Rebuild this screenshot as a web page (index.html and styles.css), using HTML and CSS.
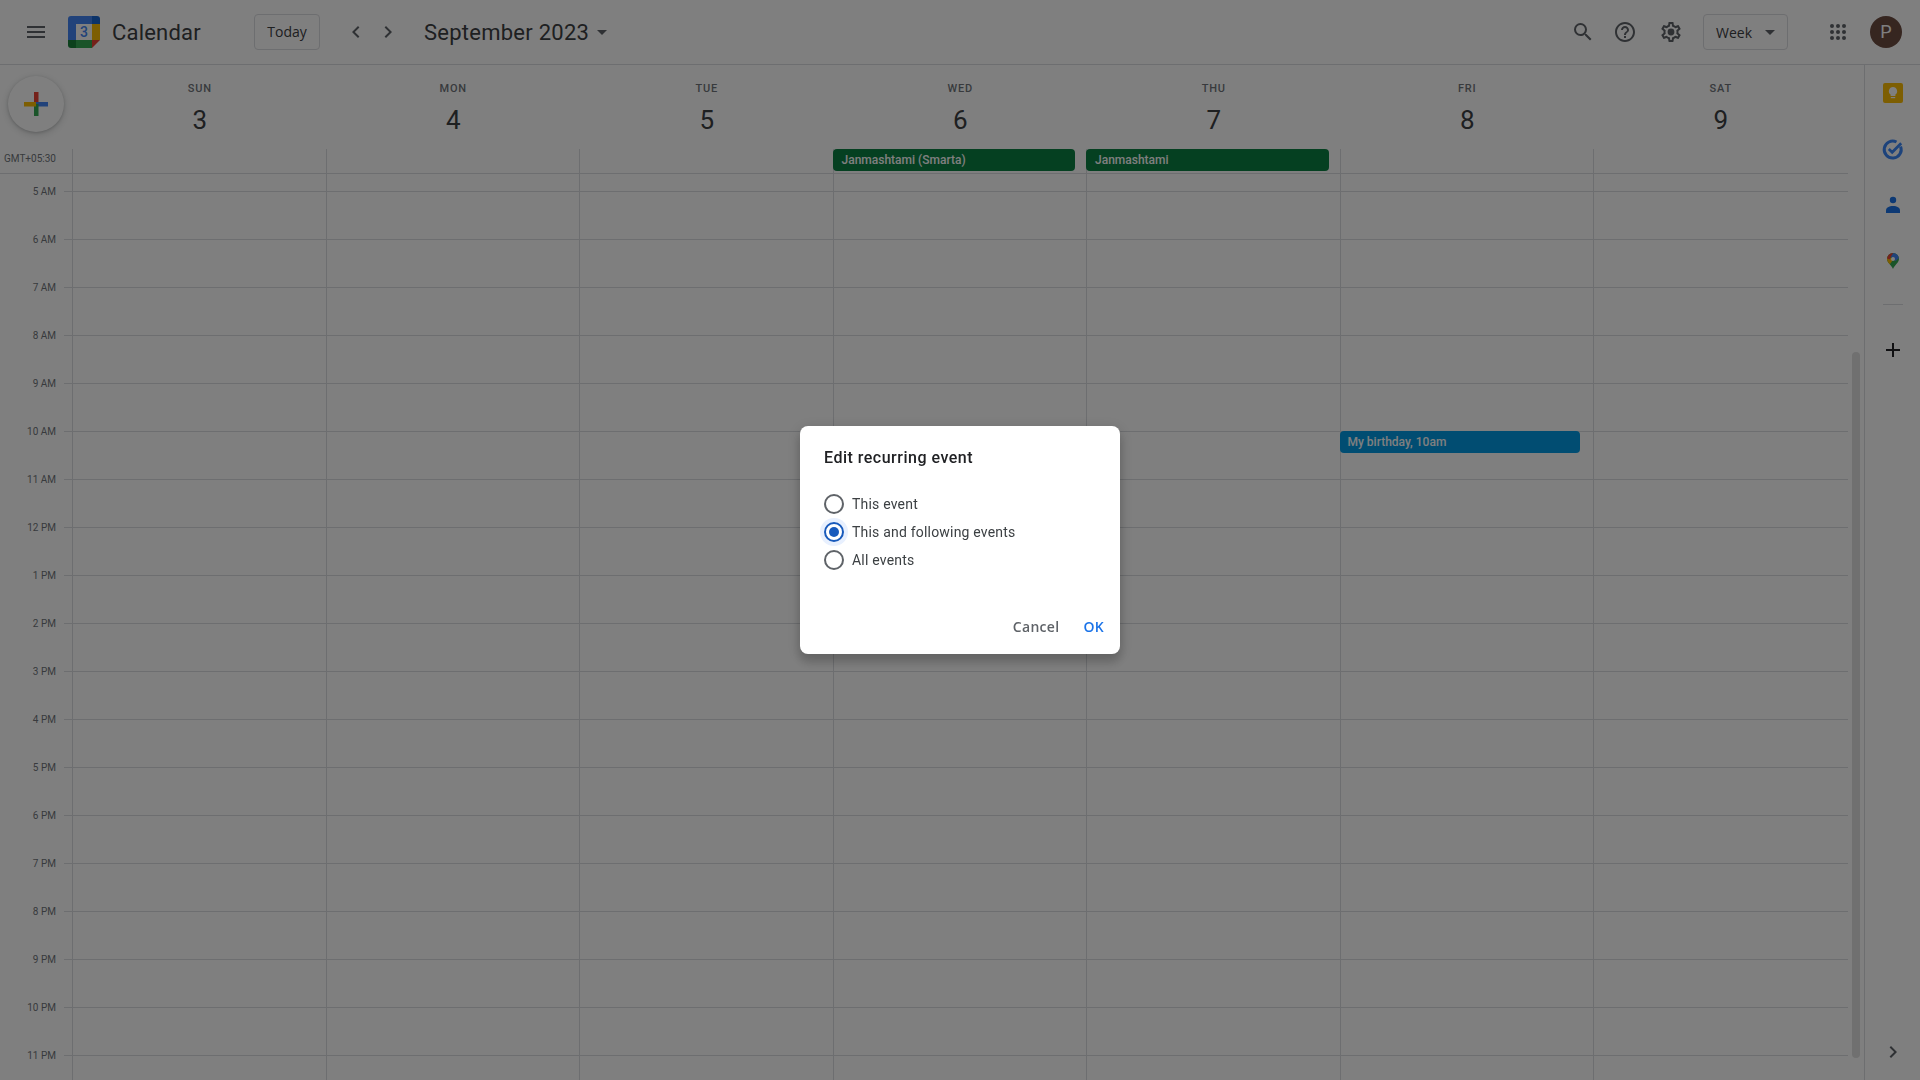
FILE: index.html
```html
<!DOCTYPE html>
<html lang="en">
<head>
  <meta charset="UTF-8" />
  <title>Calendar - Week of September 3, 2023</title>
  <link rel="stylesheet" href="styles.css">
</head>
<body>

  <header class="topbar">
    <button class="icon-btn menu-btn">
      <svg viewBox="0 0 24 24" width="24" height="24"><path d="M3 18h18v-2H3v2zm0-5h18v-2H3v2zm0-7v2h18V6H3z"/></svg>
    </button>
    <svg class="logo" viewBox="0 0 32 32" width="32" height="32">
      <path fill="#4285f4" d="M3 0h21v8H8v16H0V3a3 3 0 0 1 3-3z"/>
      <path fill="#1967d2" d="M24 0h5a3 3 0 0 1 3 3v5h-8z"/>
      <rect fill="#fbbc04" x="24" y="8" width="8" height="16"/>
      <rect fill="#34a853" x="8" y="24" width="16" height="8"/>
      <path fill="#188038" d="M0 24h8v8H3a3 3 0 0 1-3-3z"/>
      <path fill="#ea4335" d="M24 24h8l-8 8z"/>
      <rect fill="#fff" x="8" y="8" width="16" height="16"/>
      <text class="logo-num" x="16" y="21" text-anchor="middle">3</text>
    </svg>
    <span class="app-name">Calendar</span>
    <button class="outline-btn today-btn">Today</button>
    <button class="icon-btn nav-prev">
      <svg viewBox="0 0 24 24" width="24" height="24"><path d="M15.41 7.41 14 6l-6 6 6 6 1.41-1.41L10.83 12z"/></svg>
    </button>
    <button class="icon-btn nav-next">
      <svg viewBox="0 0 24 24" width="24" height="24"><path d="M8.59 16.59 10 18l6-6-6-6-1.41 1.41L13.17 12z"/></svg>
    </button>
    <span class="month-title">September 2023</span>
    <span class="caret month-caret"></span>

    <div class="topbar-right">
      <button class="icon-btn">
        <svg viewBox="0 0 24 24" width="24" height="24"><path d="M15.5 14h-.79l-.28-.27A6.471 6.471 0 0 0 16 9.5 6.5 6.5 0 1 0 9.5 16c1.61 0 3.09-.59 4.23-1.57l.27.28v.79l5 4.99L20.49 19l-4.99-5zm-6 0C7.01 14 5 11.99 5 9.5S7.01 5 9.5 5 14 7.01 14 9.5 11.99 14 9.5 14z"/></svg>
      </button>
      <button class="icon-btn">
        <svg viewBox="0 0 24 24" width="24" height="24"><path d="M11 18h2v-2h-2v2zm1-16C6.48 2 2 6.48 2 12s4.48 10 10 10 10-4.48 10-10S17.52 2 12 2zm0 18c-4.41 0-8-3.59-8-8s3.59-8 8-8 8 3.59 8 8-3.59 8-8 8zm0-14c-2.21 0-4 1.79-4 4h2c0-1.1.9-2 2-2s2 .9 2 2c0 2-3 1.75-3 5h2c0-2.25 3-2.5 3-5 0-2.21-1.79-4-4-4z"/></svg>
      </button>
      <button class="icon-btn gear-btn">
        <svg viewBox="0 0 24 24" width="24" height="24"><path d="M19.43 12.98c.04-.32.07-.64.07-.98 0-.34-.03-.66-.07-.98l2.11-1.65c.19-.15.24-.42.12-.64l-2-3.46c-.09-.16-.26-.25-.44-.25-.06 0-.12.01-.17.03l-2.49 1c-.52-.4-1.08-.73-1.69-.98l-.38-2.65C14.46 2.18 14.25 2 14 2h-4c-.25 0-.46.18-.49.42l-.38 2.65c-.61.25-1.17.59-1.69.98l-2.49-1c-.06-.02-.12-.03-.18-.03-.17 0-.34.09-.43.25l-2 3.46c-.13.22-.07.49.12.64l2.11 1.65c-.04.32-.07.65-.07.98 0 .33.03.66.07.98l-2.11 1.65c-.19.15-.24.42-.12.64l2 3.46c.09.16.26.25.44.25.06 0 .12-.01.17-.03l2.49-1c.52.4 1.08.73 1.69.98l.38 2.65c.03.24.24.42.49.42h4c.25 0 .46-.18.49-.42l.38-2.65c.61-.25 1.17-.59 1.69-.98l2.49 1c.06.02.12.03.18.03.17 0 .34-.09.43-.25l2-3.46c.12-.22.07-.49-.12-.64l-2.11-1.65zm-1.98-1.71c.04.31.05.52.05.73 0 .21-.02.43-.05.73l-.14 1.13.89.7 1.08.84-.7 1.21-1.27-.51-1.04-.42-.9.68c-.43.32-.84.56-1.25.73l-1.06.43-.16 1.13-.2 1.35h-1.4l-.19-1.35-.16-1.13-1.06-.43c-.43-.18-.83-.41-1.23-.71l-.91-.7-1.06.43-1.27.51-.7-1.21 1.08-.84.89-.7-.14-1.13c-.03-.31-.05-.54-.05-.74s.02-.43.05-.73l.14-1.13-.89-.7-1.08-.84.7-1.21 1.27.51 1.04.42.9-.68c.43-.32.84-.56 1.25-.73l1.06-.43.16-1.13.2-1.35h1.39l.19 1.35.16 1.13 1.06.43c.43.18.83.41 1.23.71l.91.7 1.06-.43 1.27-.51.7 1.21-1.07.85-.89.7.14 1.13z"/><circle cx="12" cy="12" r="3.4"/></svg>
      </button>
      <button class="outline-btn week-btn">Week<span class="caret"></span></button>
      <button class="icon-btn apps-btn">
        <svg viewBox="0 0 24 24" width="24" height="24">
          <circle cx="6" cy="6" r="2"/><circle cx="12" cy="6" r="2"/><circle cx="18" cy="6" r="2"/>
          <circle cx="6" cy="12" r="2"/><circle cx="12" cy="12" r="2"/><circle cx="18" cy="12" r="2"/>
          <circle cx="6" cy="18" r="2"/><circle cx="12" cy="18" r="2"/><circle cx="18" cy="18" r="2"/>
        </svg>
      </button>
      <div class="avatar">P</div>
    </div>
  </header>

  <div class="content">
    <main class="calendar">
      <div class="week-head">
        <div class="fab-cell">
          <button class="fab">
            <svg viewBox="0 0 36 36" width="36" height="36">
              <rect fill="#ea4335" x="16" y="6" width="4.500" height="12"/>
              <rect fill="#4285f4" x="18" y="16" width="12" height="4.500"/>
              <rect fill="#34a853" x="16" y="18" width="4.500" height="12"/>
              <rect fill="#fbbc04" x="6" y="16" width="12" height="4.500"/>
            </svg>
          </button>
        </div>
        <div class="day-head"><span class="dow">SUN</span><span class="dom">3</span></div>
        <div class="day-head"><span class="dow">MON</span><span class="dom">4</span></div>
        <div class="day-head"><span class="dow">TUE</span><span class="dom">5</span></div>
        <div class="day-head"><span class="dow">WED</span><span class="dom">6</span></div>
        <div class="day-head"><span class="dow">THU</span><span class="dom">7</span></div>
        <div class="day-head"><span class="dow">FRI</span><span class="dom">8</span></div>
        <div class="day-head"><span class="dow">SAT</span><span class="dom">9</span></div>
      </div>

      <div class="allday-row">
        <div class="tz-label">GMT+05:30</div>
        <div class="allday-cell"></div>
        <div class="allday-cell"></div>
        <div class="allday-cell"></div>
        <div class="allday-cell"><div class="event event-green">Janmashtami (Smarta)</div></div>
        <div class="allday-cell"><div class="event event-green">Janmashtami</div></div>
        <div class="allday-cell"></div>
        <div class="allday-cell"></div>
      </div>

      <div class="time-grid">
        <div class="hours">
          <span>5 AM</span><span>6 AM</span><span>7 AM</span><span>8 AM</span><span>9 AM</span>
          <span>10 AM</span><span>11 AM</span><span>12 PM</span><span>1 PM</span><span>2 PM</span>
          <span>3 PM</span><span>4 PM</span><span>5 PM</span><span>6 PM</span><span>7 PM</span>
          <span>8 PM</span><span>9 PM</span><span>10 PM</span><span>11 PM</span>
        </div>
        <div class="days">
          <div class="day"></div>
          <div class="day"></div>
          <div class="day"></div>
          <div class="day"></div>
          <div class="day"></div>
          <div class="day">
            <div class="event event-blue timed">My birthday, 10am</div>
          </div>
          <div class="day"></div>
        </div>
      </div>
      <div class="scroll-thumb"></div>
    </main>

    <aside class="side-panel">
      <svg class="side-icon" viewBox="0 0 24 24" width="24" height="24">
        <rect fill="#fbbc04" x="2" y="2" width="20" height="20" rx="2"/>
        <path fill="#fff" d="M12 6a4.200 4.200 0 0 0-2.400 7.600V15h4.800v-1.400A4.200 4.200 0 0 0 12 6z"/>
        <rect fill="#fff" x="9.800" y="16" width="4.400" height="1.200"/>
      </svg>
      <svg class="side-icon" viewBox="0 0 24 24" width="24" height="24">
        <path fill="none" stroke="#3b86f7" stroke-width="3" d="M19.600 9.500A8.500 8.500 0 1 1 15.500 5"/>
        <path fill="none" stroke="#3b86f7" stroke-width="2.800" d="m7.800 12 3.400 3.200 9-9"/>
      </svg>
      <svg class="side-icon" viewBox="0 0 24 24" width="24" height="24">
        <circle fill="#1a73e8" cx="12" cy="7" r="3.200"/>
        <path fill="#1a73e8" d="M5 20v-2.500C5 14.500 8 13 12 13s7 1.500 7 4.500V20z"/>
      </svg>
      <svg class="side-icon" viewBox="0 0 24 24" width="24" height="24">
        <clipPath id="pin"><path d="M12 4a6 6 0 0 0-6 6c0 3.600 4.300 5.800 6 10 1.700-4.200 6-6.400 6-10a6 6 0 0 0-6-6z"/></clipPath>
        <g clip-path="url(#pin)">
          <rect fill="#34a853" x="5" y="3" width="14" height="18"/>
          <polygon fill="#fbbc04" points="5,8 10,9 12,11 7.500,17 5,15"/>
          <polygon fill="#ea4335" points="5,9 8,3 13,3 10,8 8.500,10.500"/>
          <polygon fill="#4285f4" points="13,3 19,3 19,8 14.500,12 10,7.500"/>
        </g>
        <circle fill="#fff" cx="12" cy="10" r="2"/>
      </svg>
      <div class="side-divider"></div>
      <svg class="side-plus" viewBox="0 0 24 24" width="24" height="24"><path d="M19 13h-6v6h-2v-6H5v-2h6V5h2v6h6z"/></svg>
      <svg class="side-collapse" viewBox="0 0 24 24" width="24" height="24"><path d="M8.59 16.59 10 18l6-6-6-6-1.41 1.41L13.17 12z"/></svg>
    </aside>
  </div>

  <div class="scrim">
    <div class="dialog">
      <h2 class="dialog-title">Edit recurring event</h2>
      <div class="radio-list">
        <label class="radio-row"><span class="radio"></span>This event</label>
        <label class="radio-row"><span class="radio checked"></span>This and following events</label>
        <label class="radio-row"><span class="radio"></span>All events</label>
      </div>
      <div class="dialog-actions">
        <button class="text-btn">Cancel</button>
        <button class="text-btn ok">OK</button>
      </div>
    </div>
  </div>

</body>
</html>
```

FILE: styles.css
```css
* {
  box-sizing: border-box;
}

html,
body {
  height: 100%;
}

body {
  margin: 0;
  overflow: hidden;
  display: flex;
  flex-direction: column;
  font-family: Roboto, "Liberation Sans", sans-serif;
  color: #3c4043;
  background-color: #fff;
}

button {
  font-family: inherit;
  background: none;
  border: none;
  padding: 0;
  color: inherit;
}

/* top bar */
.topbar {
  flex: none;
  display: flex;
  align-items: center;
  height: 65px;
  padding-left: 24px;
  padding-right: 18px;
  border-bottom: 1px solid #dadce0;
}

.icon-btn {
  display: flex;
  align-items: center;
  justify-content: center;
  width: 24px;
  height: 24px;
}

.icon-btn svg,
.side-plus,
.side-collapse {
  fill: #5f6368;
}

.logo {
  margin-left: 20px;
}

.logo-num {
  font-family: Roboto, sans-serif;
  font-size: 14px;
  font-weight: 500;
  fill: #4285f4;
}

.app-name {
  margin-left: 12px;
  font-size: 22px;
  letter-spacing: 0.2px;
  width: 142px;
}

.outline-btn {
  height: 36px;
  padding-bottom: 2px;
  border: 1px solid #dadce0;
  border-radius: 4px;
  font-family: "Open Sans", Roboto, sans-serif;
  font-size: 14px;
  font-weight: 500;
}

.today-btn {
  width: 66px;
}

.nav-prev {
  margin-left: 24px;
}

.nav-next {
  margin-left: 8px;
}

.month-title {
  margin-left: 24px;
  font-size: 22px;
  letter-spacing: 0.25px;
}

.caret {
  display: inline-block;
  width: 0;
  height: 0;
  border-left: 5px solid transparent;
  border-right: 5px solid transparent;
  border-top: 5px solid #5f6368;
}

.month-caret {
  margin-left: 8px;
}

.topbar-right {
  margin-left: auto;
  display: flex;
  align-items: center;
}

.topbar-right .icon-btn {
  margin-right: 18px;
}

.topbar-right .gear-btn {
  margin-left: 4px;
}

.week-btn {
  width: 85px;
  margin-left: 2px;
  padding-left: 12px;
  padding-bottom: 0;
  display: flex;
  align-items: center;
  gap: 13px;
}

.topbar-right .apps-btn {
  margin-left: 38px;
  margin-right: 20px;
}

.avatar {
  width: 32px;
  height: 32px;
  border-radius: 50%;
  background-color: #6d4c41;
  color: #fff;
  font-size: 18px;
  line-height: 32px;
  text-align: center;
}

/* calendar */
.content {
  flex: 1;
  min-height: 0;
  display: flex;
}

.calendar {
  flex: 1;
  min-width: 0;
  position: relative;
  overflow: hidden;
  padding-right: 16px;
}

.week-head,
.allday-row {
  display: grid;
  grid-template-columns: 72px repeat(7, 253.5px);
}

.week-head {
  height: 84px;
}

.fab-cell {
  padding-top: 11px;
  padding-left: 8px;
}

.fab {
  display: flex;
  align-items: center;
  justify-content: center;
  width: 56px;
  height: 56px;
  border-radius: 50%;
  background-color: #fff;
  box-shadow: 0 1px 3px rgba(60, 64, 67, 0.25), 0 2px 6px 2px rgba(60, 64, 67, 0.12);
}

.day-head {
  display: flex;
  flex-direction: column;
  align-items: center;
  padding-top: 16px;
  padding-left: 2px;
}

.dow {
  font-size: 11px;
  font-weight: 500;
  line-height: 16px;
  letter-spacing: 0.8px;
  color: #70757a;
}

.dom {
  margin-top: 7px;
  font-size: 26px;
  line-height: 32px;
  color: #3c4043;
}

.allday-row {
  height: 25px;
  border-bottom: 1px solid #dadce0;
}

.tz-label {
  padding-left: 4px;
  font-size: 10px;
  line-height: 20px;
  color: #70757a;
}

.allday-cell {
  border-left: 1px solid #dadce0;
  min-width: 0;
}

.event {
  height: 22px;
  margin-left: -1px;
  margin-right: 11px;
  padding-left: 9px;
  border-radius: 4px;
  color: #fff;
  font-size: 12px;
  font-weight: 500;
  line-height: 22px;
}

.event-green {
  background-color: #0b8043;
}

.event-blue {
  background-color: #039be5;
}

.event.timed {
  position: absolute;
  top: 257px;
  left: -1px;
  right: 13px;
  margin: 0;
  padding-left: 8px;
}

.time-grid {
  display: flex;
  height: 920px;
}

.hours {
  flex: none;
  width: 72px;
  padding-top: 11px;
  display: flex;
  flex-direction: column;
  background-image: linear-gradient(#dadce0 1px, transparent 1px);
  background-size: 8px 48px;
  background-repeat: repeat-y;
  background-position: 64px 17px;
}

.hours span {
  flex: none;
  height: 48px;
  padding-right: 16px;
  text-align: right;
  font-size: 10px;
  line-height: 14px;
  color: #70757a;
}

.days {
  flex: 1;
  display: grid;
  grid-template-columns: repeat(7, 253.5px);
  background-image: linear-gradient(#dadce0 1px, transparent 1px);
  background-size: 100% 48px;
  background-position: 0 17px;
}

.day {
  position: relative;
  border-left: 1px solid #dadce0;
  min-width: 0;
}

.scroll-thumb {
  position: absolute;
  top: 287px;
  left: 1852px;
  width: 8px;
  height: 706px;
  border-radius: 4px;
  background-color: #e0e0e0;
}

/* side panel */
.side-panel {
  flex: none;
  position: relative;
  width: 56px;
  display: flex;
  flex-direction: column;
  align-items: center;
  padding-top: 16px;
  border-left: 1px solid #dadce0;
}

.side-icon {
  flex: none;
  margin-bottom: 32px;
}

.side-divider {
  width: 20px;
  height: 1px;
  margin-top: -1px;
  background-color: #dadce0;
}

.side-plus {
  margin-top: 33px;
  fill: #202124;
}

.side-collapse {
  position: absolute;
  bottom: 16px;
  left: 16px;
}

/* dialog */
.scrim {
  position: fixed;
  inset: 0;
  display: flex;
  align-items: center;
  justify-content: center;
  background-color: rgba(0, 0, 0, 0.5);
}

.dialog {
  width: 320px;
  height: 228px;
  padding: 24px 16px 0 24px;
  display: flex;
  flex-direction: column;
  border-radius: 8px;
  background-color: #fff;
  box-shadow: 0 8px 10px 1px rgba(0, 0, 0, 0.14), 0 3px 14px 2px rgba(0, 0, 0, 0.12);
}

.dialog-title {
  margin: 0;
  font-size: 16px;
  font-weight: 500;
  line-height: 16px;
  letter-spacing: 0.5px;
  color: #202124;
}

.radio-list {
  margin-top: 24px;
  display: flex;
  flex-direction: column;
}

.radio-row {
  display: flex;
  align-items: center;
  height: 28px;
  gap: 8px;
  font-size: 14px;
  letter-spacing: 0.2px;
  color: #3c4043;
}

.radio {
  position: relative;
  width: 20px;
  height: 20px;
  border: 2px solid #5f6368;
  border-radius: 50%;
}

.radio.checked {
  border-color: #185abc;
  box-shadow: 0 0 0 4px #e8f0fe;
}

.radio.checked::after {
  content: "";
  position: absolute;
  top: 3px;
  left: 3px;
  width: 10px;
  height: 10px;
  border-radius: 50%;
  background-color: #185abc;
}

.dialog-actions {
  margin-top: auto;
  margin-bottom: 18px;
  display: flex;
  justify-content: flex-end;
  gap: 24px;
}

.text-btn {
  font-family: "Open Sans", Roboto, sans-serif;
  font-size: 14px;
  font-weight: 600;
  line-height: 18px;
  letter-spacing: 0.3px;
  color: #5f6368;
}

.text-btn.ok {
  color: #1a73e8;
}
```
